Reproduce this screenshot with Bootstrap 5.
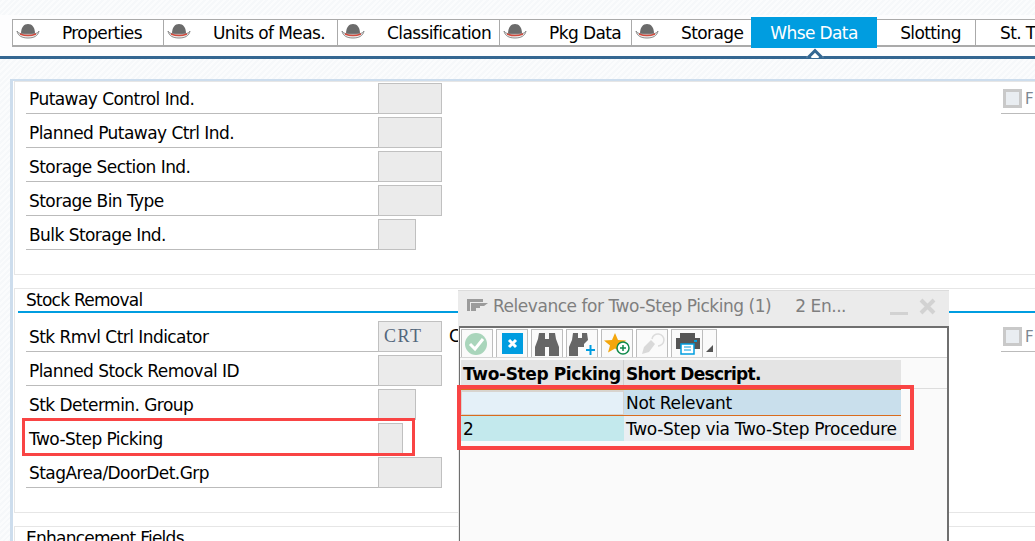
<!DOCTYPE html>
<html lang="en">
<head>
  <meta charset="UTF-8" />
  <title>Whse Data</title>
  <link href="https://cdn.jsdelivr.net/npm/bootstrap@5.3.0/dist/css/bootstrap.min.css" rel="stylesheet" />
  <style>
    html, body { height: 541px; overflow: hidden; }
    body {
      font-family: "DejaVu Sans", sans-serif;
      font-size: 17px;
      letter-spacing: -.46px;
      color: #000;
      background: repeating-linear-gradient(135deg, #f6f8fa 0 2px, #fbfcfd 2px 4px);
    }
    .tab-head { height: 44px; margin-top: 15px; padding: 4px 0 0 12px; background: #fdfdfe; border-bottom: 3px solid #346792; position: relative; }
    .tab-strip { height: 28px; background: #fff; border: 1px solid #aaa; border-bottom-width: 2px; border-right: 0; letter-spacing: -.6px; }
    .tab-item { height: 100%; border-right: 1px solid #aaa; flex: none; line-height: 26px; white-space: nowrap; }
    .tab-item svg { margin: 3px 0 0 3px; flex: none; }
    .tab-item span { margin-left: 22px; }
    .tab-item.on { background: #009de0; color: #fff; border: 0; height: 31px; margin-top: -3px; line-height: 32px; text-align: center; }
    .tab-item.slot { padding-left: 9px; }
    .tab-notch { position: absolute; left: 804px; top: 33px; width: 22px; height: 10px; overflow: hidden; }
    .tab-notch::after { content: ""; position: absolute; left: 5px; top: 3px; width: 12px; height: 12px; background: #fff; border: 3px solid #346792; transform: rotate(45deg); }
    .sheet { margin: 20px 0 0 10px; height: 463px; background: #fff; border-left: 3px solid #cddded; border-top: 2px solid #cddded; padding-left: 1px; }
    .blk { border: 1px solid #e6e6e6; border-right: 0; background: #fff; padding: 0 0 0 11px; }
    .blk-one { height: 194px; margin-bottom: 13px; padding-top: 1px; }
    .blk-two { height: 225px; margin-bottom: 13px; }
    .blk-title { height: 24px; line-height: 23px; margin-left: -8px; padding-left: 8px; border-bottom: 2px solid #009de0; margin-bottom: 8px; letter-spacing: -.75px; }
    .fld-row { height: 31px; margin-bottom: 3px; }
    .fld-lbl { width: 352px; height: 31px; line-height: 33px; padding-left: 3px; border-bottom: 1px solid #bbb; letter-spacing: -.55px; white-space: nowrap; }
    .fld-box { width: 64px; height: 31px; background: #ebebeb; border: 1px solid #c0c0c0; }
    .fld-box.w38 { width: 38px; }
    .fld-box.w25 { width: 25px; }
    .fld-val { font-family: "Liberation Serif", serif; font-size: 18px; letter-spacing: 1.500px; color: #54677c; line-height: 28px; padding-left: 5px; }
    .fld-txt { margin-left: 7px; line-height: 31px; }
    .fld-opt { position: absolute; left: 1001px; width: 34px; height: 25px; border-bottom: 1px solid #bbb; color: #7d8791; font-size: 15px; line-height: 20px; overflow: hidden; }
    .fld-opt span { display: inline-block; width: 19px; height: 19px; margin: 0 3px 0 2px; background: #e9edf1; border: 3px solid #c9c9c9; vertical-align: top; }
    .popup { position: absolute; left: 458px; top: 290px; width: 491px; height: 260px; background: #ebebeb; border-top: 1px solid #dcdcdc; }
    .popup-head { height: 35px; color: #7f7f7f; padding-left: 9px; line-height: 31px; white-space: nowrap; }
    .popup-body { height: 230px; margin-left: 1px; background: #fafafa; border: 1px solid #6f6f6f; border-top-width: 2px; border-right-width: 2px; }
    .popup-tools { height: 30px; background: #fff; padding: 1px 0 0 1px; border-bottom: 1px solid #d5d5d5; }
    .tool-btn { width: 32px; height: 28px; margin-right: 3px; border: 1px solid #bdbdbd; border-bottom: 0; background: #fafafa; }
    .tool-btn.dd { width: 15px; margin-left: -4px; margin-right: 0; }
    .tbl-wrap { padding-left: 1px; }
    .tbl-head { height: 29px; margin-top: 2px; border-bottom: 1px solid #ddd; font-weight: 700; letter-spacing: -.38px; line-height: 29px; }
    .cell-a { width: 163px; padding-left: 2px; flex: none; white-space: nowrap; overflow: hidden; }
    .cell-b { width: 277px; padding-left: 2px; flex: none; white-space: nowrap; overflow: hidden; }
    .tbl-head .cell-a, .tbl-head .cell-b { background: #e4e4e4; }
    .tbl-head .cell-a { border-right: 1px solid #cfcfcf; }
    .tbl-head .cell-b { letter-spacing: -.7px; }
    .tbl-row { height: 26px; line-height: 26px; border-top: 1px solid #d96c1e; width: 440px; letter-spacing: -.33px; }
    .tbl-row.r1 .cell-a { background: #e4f0f8; border: 1px solid #d8d4cf; border-top-width: 2px; }
    .tbl-row.r1 .cell-b { background: #c9dfec; }
    .tbl-row.r2 .cell-a { background: #c3e9ed; }
    .tbl-row.r2 .cell-b { background: #e9eef2; }
    .red-mark { position: absolute; border: 3px solid #f94444; pointer-events: none; }
    .red-mark.thick { border-width: 4px; }
  </style>
</head>
<body>
  <!-- tabs -->
  <div class="tab-head">
    <div class="tab-strip d-flex">
      <div class="tab-item d-flex" style="width:151px"><svg width="24" height="16" viewBox="0 0 24 16"><use href="#hat"/></svg><span>Properties</span></div>
      <div class="tab-item d-flex" style="width:174px"><svg width="24" height="16" viewBox="0 0 24 16"><use href="#hat"/></svg><span>Units of Meas.</span></div>
      <div class="tab-item d-flex" style="width:162px"><svg width="24" height="16" viewBox="0 0 24 16"><use href="#hat"/></svg><span>Classification</span></div>
      <div class="tab-item d-flex" style="width:132px"><svg width="24" height="16" viewBox="0 0 24 16"><use href="#hat"/></svg><span>Pkg Data</span></div>
      <div class="tab-item d-flex" style="width:119px;border-right:0"><svg width="24" height="16" viewBox="0 0 24 16"><use href="#hat"/></svg><span>Storage</span></div>
      <div class="tab-item on" style="width:126px">Whse Data</div>
      <div class="tab-item slot text-center" style="width:99px">Slotting</div>
      <div class="tab-item ps-4" style="width:80px;border-right:0">St. T</div>
    </div>
    <div class="tab-notch"></div>
  </div>

  <!-- form blocks -->
  <div class="sheet">
    <div class="blk blk-one">
      <div class="fld-row d-flex"><div class="fld-lbl">Putaway Control Ind.</div><div class="fld-box"></div></div>
      <div class="fld-row d-flex"><div class="fld-lbl">Planned Putaway Ctrl Ind.</div><div class="fld-box"></div></div>
      <div class="fld-row d-flex"><div class="fld-lbl">Storage Section Ind.</div><div class="fld-box"></div></div>
      <div class="fld-row d-flex"><div class="fld-lbl">Storage Bin Type</div><div class="fld-box"></div></div>
      <div class="fld-row d-flex"><div class="fld-lbl">Bulk Storage Ind.</div><div class="fld-box w38"></div></div>
    </div>
    <div class="blk blk-two">
      <div class="blk-title">Stock Removal</div>
      <div class="fld-row d-flex"><div class="fld-lbl">Stk Rmvl Ctrl Indicator</div><div class="fld-box fld-val">CRT</div><div class="fld-txt">C</div></div>
      <div class="fld-row d-flex"><div class="fld-lbl">Planned Stock Removal ID</div><div class="fld-box"></div></div>
      <div class="fld-row d-flex"><div class="fld-lbl">Stk Determin. Group</div><div class="fld-box w38"></div></div>
      <div class="fld-row d-flex"><div class="fld-lbl">Two-Step Picking</div><div class="fld-box w25"></div></div>
      <div class="fld-row d-flex"><div class="fld-lbl">StagArea/DoorDet.Grp</div><div class="fld-box"></div></div>
    </div>
    <div class="blk">
      <div class="blk-title">Enhancement Fields</div>
    </div>
  </div>

  <div class="fld-opt" style="top:89px"><span></span>F</div>
  <div class="fld-opt" style="top:327px"><span></span>F</div>

  <!-- value help popup -->
  <div class="popup">
    <div class="popup-head d-flex">
      <svg class="flex-none" width="22" height="16" viewBox="0 0 22 16" style="margin:7px 4px 0 0"><path fill="#9b9b9b" d="M0 1h16v3h-13v9h-3zM4 5h17l-4 3h-4v2h-4v3h-5z"/></svg>
      <span>Relevance for Two-Step Picking (1)</span>
      <span style="margin-left:24px">2 En...</span>
      <svg width="52" height="22" viewBox="0 0 52 22" style="position:absolute;left:432px;top:5px"><path fill="#d2d2d2" d="M0 16h18v3H0z"/><path stroke="#d2d2d2" stroke-width="4" d="M31 4l13 13M44 4L31 17"/></svg>
    </div>
    <div class="popup-body">
      <div class="popup-tools d-flex">
        <div class="tool-btn"><svg width="30" height="26" viewBox="0 0 30 26"><circle cx="14" cy="14" r="11" fill="#a9d5bb"/><path d="M8 14l5 5 8-10" fill="none" stroke="#fff" stroke-width="3"/></svg></div>
        <div class="tool-btn"><svg width="30" height="26" viewBox="0 0 30 26"><rect x="5" y="3" width="21" height="21" fill="#009de0"/><path d="M12 10l7 7M19 10l-7 7" stroke="#fff" stroke-width="3"/></svg></div>
        <div class="tool-btn"><svg width="30" height="26" viewBox="0 0 30 26"><path fill="#666" d="M7 3h6v6h4V3h6l1 6 3 8v9H17v-9h-4v9H3v-9l3-8z"/></svg></div>
        <div class="tool-btn"><svg width="30" height="26" viewBox="0 0 30 26"><path fill="#666" d="M6 3h5v5h4V3h5l1 7-4 4v3h-6v9H2v-9l3-7z"/><path d="M19 20h9M23.500 15v10" stroke="#009de0" stroke-width="2"/></svg></div>
        <div class="tool-btn"><svg width="30" height="26" viewBox="0 0 30 26"><path fill="#f4a60c" d="M13 3l3 7 8 .5-6 5 2 7-7-4-7 4 2-7-6-5 8-.5z"/><circle cx="21" cy="18" r="6" fill="#fff" stroke="#108a4c" stroke-width="1.500"/><path d="M18 18h6M21 15v6" stroke="#108a4c" stroke-width="1.500"/></svg></div>
        <div class="tool-btn"><svg width="30" height="26" viewBox="0 0 30 26"><path fill="#d9d9d9" d="M5 24l2-7 7-7 4 4-6 8z"/><path d="M15 9a6 6 0 1 1 6 7" fill="none" stroke="#dcdcdc" stroke-width="1.500"/></svg></div>
        <div class="tool-btn"><svg width="30" height="26" viewBox="0 0 30 26"><path fill="#555" d="M8 3h15v5H8z"/><path fill="#555" d="M4 8h24v11H4z"/><path fill="#009de0" d="M22 10h3v2h-3z"/><rect x="9" y="14" width="13" height="10" fill="#fff" stroke="#009de0" stroke-width="1.500"/><path d="M12 17h7M12 20h7" stroke="#009de0"/></svg></div>
        <div class="tool-btn dd"><svg width="13" height="26" viewBox="0 0 13 26"><path fill="#555" d="M3 22l7-7v7z"/></svg></div>
      </div>
      <div class="tbl-wrap">
        <div class="tbl-head d-flex"><div class="cell-a">Two-Step Picking</div><div class="cell-b">Short Descript.</div></div>
        <div class="tbl-row r1 d-flex"><div class="cell-a"></div><div class="cell-b">Not Relevant</div></div>
        <div class="tbl-row r2 d-flex"><div class="cell-a">2</div><div class="cell-b">Two-Step via Two-Step Procedure</div></div>
      </div>
    </div>
  </div>

  <div class="red-mark" style="left:22px;top:418px;width:393px;height:38px"></div>
  <div class="red-mark thick" style="left:457px;top:385px;width:457px;height:65px"></div>

  <svg width="0" height="0" class="position-absolute">
    <symbol id="hat" viewBox="0 0 24 16">
      <path fill="#6b6b6b" d="M5 11C5 4 8 1 12 1s7 3 7 10z"/>
      <path fill="#eee" stroke="#8a8a8a" d="M1 8c2 3 5 3 11 3s9 0 11-3c-1 5-5 7-11 7S2 13 1 8z"/>
      <path fill="none" stroke="#d24b3e" stroke-width="1.500" d="M4 11c5 2 11 2 16 0"/>
    </symbol>
  </svg>
  <script src="https://cdn.jsdelivr.net/npm/bootstrap@5.3.0/dist/js/bootstrap.bundle.min.js"></script>
</body>
</html>
